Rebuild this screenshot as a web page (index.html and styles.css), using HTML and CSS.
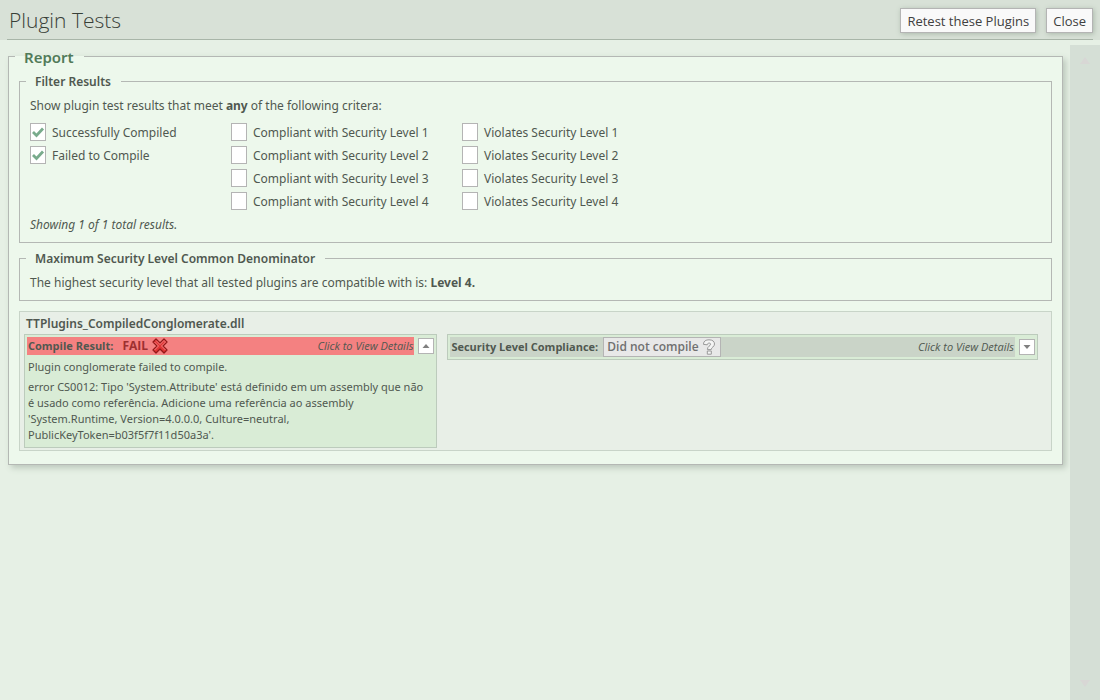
FILE: index.html
```html
<!DOCTYPE html>
<html lang="en">
<head>
<meta charset="utf-8">
<title>Plugin Tests</title>
<link rel="stylesheet" href="styles.css">
</head>
<body>
<header class="header">
  <h1 class="title">Plugin Tests</h1>
  <div class="actions">
    <button class="button" type="button">Retest these Plugins</button>
    <button class="button" type="button">Close</button>
  </div>
</header>
<div class="viewport">
  <main class="content">
    <fieldset class="group report">
      <legend class="legend legend-main">Report</legend>
      <div class="group-body">
        <fieldset class="group filter">
          <legend class="legend">Filter Results</legend>
          <div class="group-body">
            <p class="line">Show plugin test results that meet <b>any</b> of the following critera:</p>
            <div class="criteria">
              <div class="criteria-col">
                <label class="check"><input type="checkbox" checked>Successfully Compiled</label>
                <label class="check"><input type="checkbox" checked>Failed to Compile</label>
              </div>
              <div class="criteria-col">
                <label class="check"><input type="checkbox">Compliant with Security Level 1</label>
                <label class="check"><input type="checkbox">Compliant with Security Level 2</label>
                <label class="check"><input type="checkbox">Compliant with Security Level 3</label>
                <label class="check"><input type="checkbox">Compliant with Security Level 4</label>
              </div>
              <div class="criteria-col">
                <label class="check"><input type="checkbox">Violates Security Level 1</label>
                <label class="check"><input type="checkbox">Violates Security Level 2</label>
                <label class="check"><input type="checkbox">Violates Security Level 3</label>
                <label class="check"><input type="checkbox">Violates Security Level 4</label>
              </div>
            </div>
            <p class="line"><i>Showing 1 of 1 total results.</i></p>
          </div>
        </fieldset>
        <fieldset class="group">
          <legend class="legend">Maximum Security Level Common Denominator</legend>
          <div class="group-body">
            <p class="line">The highest security level that all tested plugins are compatible with is: <b>Level 4.</b></p>
          </div>
        </fieldset>
        <section class="result">
          <h2 class="result-name">TTPlugins_CompiledConglomerate.dll</h2>
          <div class="panels">
            <div class="panel">
              <div class="panel-head">
                <div class="bar bar-fail">
                  <b>Compile Result:</b>
                  <b class="fail">FAIL</b>
                  <svg class="icon" viewBox="0 0 16 16" aria-hidden="true">
                    <path d="M4 1 8 5 12 1 15 4 11 8 15 12 12 15 8 11 4 15 1 12 5 8 1 4Z" fill="#e03535" stroke="#941818" stroke-width="1.3" stroke-linejoin="round"/>
                    <path d="M4 2.5 8 6.5 12 2.5 13.5 4 9.5 8 13.5 12M2.5 4 6.5 8 2.5 12" fill="none" stroke="#f58080" stroke-width="1"/>
                  </svg>
                  <i class="hint">Click to View Details</i>
                </div>
                <button class="toggle" type="button" aria-label="Collapse compile result"><svg viewBox="0 0 14 14" aria-hidden="true"><path d="M3.5 9 7 5 10.5 9Z"/></svg></button>
              </div>
              <div class="message">
                <p>Plugin conglomerate failed to compile.</p>
                <p>error CS0012: Tipo 'System.Attribute' está definido em um assembly que não é&nbsp;usado como referência. Adicione uma referência ao assembly 'System.Runtime, Version=4.0.0.0, Culture=neutral, PublicKeyToken=b03f5f7f11d50a3a'.</p>
              </div>
            </div>
            <div class="panel">
              <div class="panel-head">
                <div class="bar bar-neutral">
                  <b>Security Level Compliance:</b>
                  <span class="status">Did not compile
                    <svg class="icon" viewBox="0 0 16 16" aria-hidden="true">
                      <path d="M2.5 5C2.5 2 5 .8 8 .8 11.5 .8 13.5 2.4 13.5 5 13.5 8 10.2 8.2 10.2 10.6H6.4C6.4 7 9.6 7 9.6 5.2 9.6 3.6 6.4 3.6 6.2 5.8L2.5 5.4ZM6.3 12H10.3V15.2H6.3Z" fill="#f4f4f4" stroke="#999" stroke-width="1" stroke-linejoin="round"/>
                    </svg>
                  </span>
                  <i class="hint">Click to View Details</i>
                </div>
                <button class="toggle" type="button" aria-label="Expand security level compliance"><svg viewBox="0 0 14 14" aria-hidden="true"><path d="M3.5 5H10.5L7 9Z"/></svg></button>
              </div>
            </div>
          </div>
        </section>
      </div>
    </fieldset>
  </main>
  <div class="scrollbar" aria-hidden="true">
    <svg class="arrow" viewBox="0 0 10 8"><path d="M0 8 5 1 10 8Z"/></svg>
    <svg class="arrow" viewBox="0 0 10 8"><path d="M0 0H10L5 7Z"/></svg>
  </div>
</div>
</body>
</html>
```
FILE: styles.css
```css
* { box-sizing: border-box; }
body {
  margin: 0;
  min-height: 100vh;
  display: flex;
  flex-direction: column;
  background: #e6f0e5;
  color: #505850;
  font: 12px/16px "Noto Sans", "Open Sans", sans-serif;
}
h1, h2, p { margin: 0; }
button { font: inherit; color: #404040; }
.header {
  display: flex;
  align-items: flex-start;
  justify-content: space-between;
  height: 40px;
  margin-bottom: 5px;
  padding: 0 7px;
  background: linear-gradient(#a8b5a8, #a8b5a8) 7px 39px / calc(100% - 14px) 1px no-repeat, #d8e1d7;
}
.title { padding: 6px 2px; font: 300 21px/28px "Open Sans", sans-serif; color: #384038; }
.actions { display: flex; gap: 10px; padding-top: 8px; }
.button {
  height: 25px;
  padding: 0 6px;
  border: 1px solid #b4b4b4;
  background: #f9f9f9;
  box-shadow: 1px 1px 5px #aab8aa;
  font: 13px/16px "Open Sans", sans-serif;
}
.viewport { display: flex; flex: 1; }
.content { flex: 1; padding: 2px 7px 20px 8px; }
.scrollbar {
  width: 30px;
  padding: 11px 10px 12px;
  display: flex;
  flex-direction: column;
  justify-content: space-between;
  background: #d5dfd6;
}
.arrow { width: 10px; height: 8px; fill: #d8d7d5; }
.group { min-width: 0; margin: 0; padding: 0 6px; border: 1px solid #b4b8b4; }
.report {
  padding-bottom: 13px;
  background: #edf8ec;
  box-shadow: 3px 3px 6px #bcc8bc;
}
.legend { padding: 2px 10px 0 9px; line-height: 14px; font-weight: 600; }
.legend-main { font-size: 15px; line-height: 16px; color: #517a59; }
.group-body { padding: 8px 4px 0; }
.group .group .group-body { padding: 9px 4px; }
.filter { margin-bottom: 7px; }
.criteria { display: grid; grid-template-columns: 201px 231px 1fr; padding: 7px 0 4px; }
.check { display: flex; gap: 6px; height: 23px; padding-top: 2px; line-height: 20px; }
.check input {
  appearance: none;
  width: 16px;
  height: 18px;
  margin: 0;
  border: 1px solid #b4b4b4;
  background: #fff;
}
.check input:checked {
  background: #fff url("data:image/svg+xml,%3Csvg xmlns='http://www.w3.org/2000/svg' viewBox='0 0 14 16'%3E%3Cpath d='M2 8 5.5 11.5 12 4.5' fill='none' stroke='%2379ab8c' stroke-width='2.8'/%3E%3C/svg%3E") center / 14px 16px no-repeat;
}
.result {
  margin-top: 10px;
  padding: 4px 13px 2px 4px;
  border: 1px solid #c8d4c8;
  background: #e8efe7;
}
.result-name { padding: 0 2px 2px; font-size: 12px; line-height: 16px; font-weight: 600; }
.panels {
  display: grid;
  grid-template-columns: 7fr 10fr;
  gap: 10px;
  align-items: start;
  font-family: "Open Sans", sans-serif;
  font-size: 11px;
}
.panel { padding: 2px; border: 1px solid #bccbbc; background: #d9ecd6; }
.panel-head { display: flex; align-items: center; gap: 4px; }
.bar { flex: 1; display: flex; align-items: center; padding: 0 1px; white-space: nowrap; }
.bar b { font-weight: 700; }
.bar-fail { height: 18px; background: #f48181; }
.bar-neutral { height: 20px; background: #cad4c8; }
.bar .fail { margin: 0 4px 0 9px; font-size: 12px; color: #9d3030; }
.icon { width: 16px; height: 16px; flex: none; }
.hint { margin-left: auto; }
.status {
  display: flex;
  align-items: center;
  gap: 2px;
  height: 20px;
  margin-left: 5px;
  padding: 0 3px;
  border: 1px solid #b4b4b4;
  background: #e8e8e8;
  color: #707070;
  font-size: 12px;
  font-weight: 600;
}
.toggle {
  width: 16px;
  height: 16px;
  padding: 0;
  border: 1px solid #b4b4b4;
  background: #fff;
}
.toggle svg { display: block; width: 14px; height: 14px; fill: #808080; }
.message { padding: 4px 0 2px 1px; font-family: "Noto Sans", sans-serif; }
.message p + p { margin-top: 4px; }
```
